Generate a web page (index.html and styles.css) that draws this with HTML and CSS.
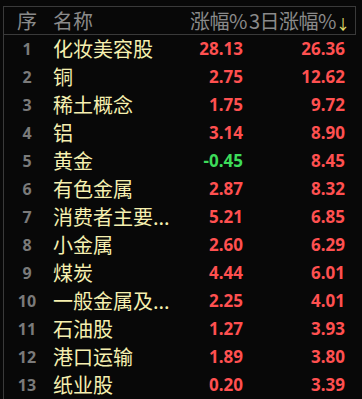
FILE: index.html
```html
<!DOCTYPE html>
<html lang="zh">
<head>
<meta charset="utf-8">
<link rel="stylesheet" href="styles.css">
</head>
<body>
<div class="table">
  <div class="head">
    <span class="c-num">序</span>
    <span class="c-name">名称</span>
    <span class="c-v1">涨幅%</span>
    <span class="c-v2">3日涨幅%<span class="arrow">↓</span></span>
  </div>
  <div class="body">
    <div class="row"><span class="c-num">1</span><span class="c-name">化妆美容股</span><span class="c-v1 up">28.13</span><span class="c-v2 up">26.36</span></div>
    <div class="row"><span class="c-num">2</span><span class="c-name">铜</span><span class="c-v1 up">2.75</span><span class="c-v2 up">12.62</span></div>
    <div class="row"><span class="c-num">3</span><span class="c-name">稀土概念</span><span class="c-v1 up">1.75</span><span class="c-v2 up">9.72</span></div>
    <div class="row"><span class="c-num">4</span><span class="c-name">铝</span><span class="c-v1 up">3.14</span><span class="c-v2 up">8.90</span></div>
    <div class="row"><span class="c-num">5</span><span class="c-name">黄金</span><span class="c-v1 down">-0.45</span><span class="c-v2 up">8.45</span></div>
    <div class="row"><span class="c-num">6</span><span class="c-name">有色金属</span><span class="c-v1 up">2.87</span><span class="c-v2 up">8.32</span></div>
    <div class="row"><span class="c-num">7</span><span class="c-name">消费者主要...</span><span class="c-v1 up">5.21</span><span class="c-v2 up">6.85</span></div>
    <div class="row"><span class="c-num">8</span><span class="c-name">小金属</span><span class="c-v1 up">2.60</span><span class="c-v2 up">6.29</span></div>
    <div class="row"><span class="c-num">9</span><span class="c-name">煤炭</span><span class="c-v1 up">4.44</span><span class="c-v2 up">6.01</span></div>
    <div class="row"><span class="c-num">10</span><span class="c-name">一般金属及...</span><span class="c-v1 up">2.25</span><span class="c-v2 up">4.01</span></div>
    <div class="row"><span class="c-num">11</span><span class="c-name">石油股</span><span class="c-v1 up">1.27</span><span class="c-v2 up">3.93</span></div>
    <div class="row"><span class="c-num">12</span><span class="c-name">港口运输</span><span class="c-v1 up">1.89</span><span class="c-v2 up">3.80</span></div>
    <div class="row"><span class="c-num">13</span><span class="c-name">纸业股</span><span class="c-v1 up">0.20</span><span class="c-v2 up">3.39</span></div>
  </div>
</div>
</body>
</html>
```
FILE: styles.css
```css
html, body {
  margin: 0;
  padding: 0;
  background: #080808;
  height: 100%;
  overflow: hidden;
}
.table {
  margin: 6px 0 0 3px;
  width: 352px;
  border-left: 1px solid #3a3a3a;
  border-top: 1px solid #3a3a3a;
  font-family: "Noto Sans", "Noto Sans CJK SC", sans-serif;
}
.head {
  display: flex;
  height: 27px;
  line-height: 27px;
  border-bottom: 1px solid #3a3a3a;
  border-right: 1px solid #3a3a3a;
  color: #8a8a8a;
  font-family: "Noto Sans CJK SC", sans-serif;
  font-size: 20px;
  white-space: nowrap;
  overflow: hidden;
}
.body {
  border-bottom: 2px solid #f0e86a;
}
.row {
  display: flex;
  height: 28px;
  line-height: 28px;
  white-space: nowrap;
}
.c-num {
  width: 46px;
  flex: none;
  text-align: center;
}
.c-name {
  width: 127px;
  flex: none;
  padding-left: 3px;
  overflow: hidden;
}
.c-v1 {
  width: 67px;
  flex: none;
  text-align: right;
}
.c-v2 {
  width: 98px;
  flex: none;
  text-align: right;
}
.head .c-v1 {
  letter-spacing: -0.5px;
}
.head .c-v2 {
  letter-spacing: -0.5px;
  padding-left: 2px;
  width: 96px;
}
.head .arrow {
  color: #e8e070;
  font-size: 14px;
  letter-spacing: 0;
}
.row .c-num {
  color: #7a7a7a;
  font-weight: 700;
  font-size: 16px;
}
.row .c-name {
  color: #f6f0b0;
  font-family: "Noto Sans CJK SC", sans-serif;
  font-size: 20px;
}
.row .c-v1, .row .c-v2 {
  font-weight: 700;
  font-size: 17px;
}
.row .c-v1 {
  padding-right: 4px;
  width: 63px;
}
.up { color: #ff5050; }
.down { color: #3ddc5a; }
```
